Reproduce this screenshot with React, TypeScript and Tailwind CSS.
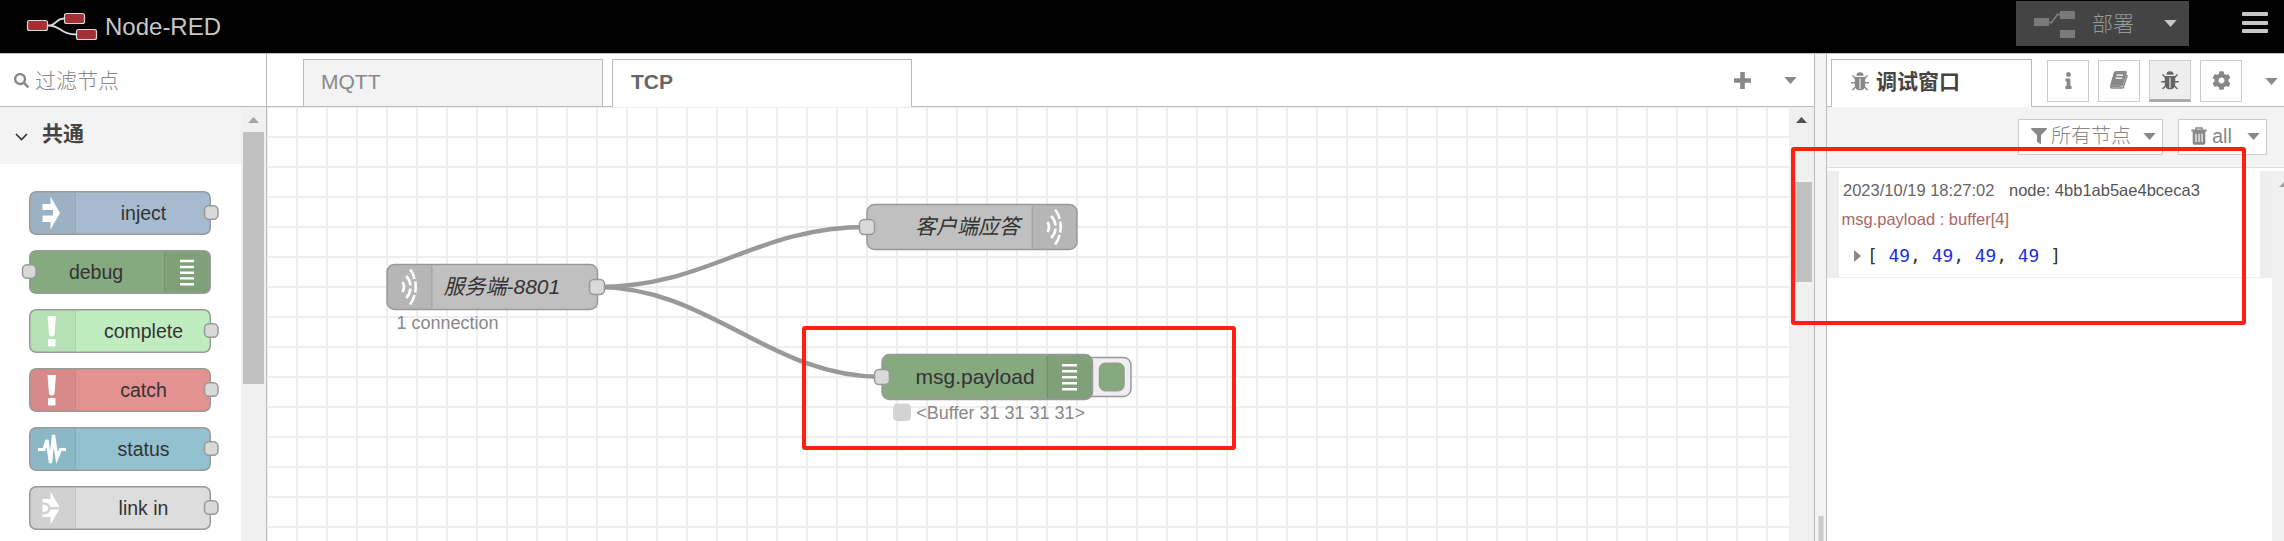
import React from "react";
import { FaInfo, FaCog, FaFilter, FaSearch } from "react-icons/fa";

const PaletteIcons: Record<string, React.ReactNode> = {
  inject: <path d="M13.500 13h8V5.500L31 22L21.500 38.500V31H13.500V24.500H24V19H13.500Z" fill="#fff" />,
  bang: (
    <g fill="#fff">
      <path d="M18.500 7h8.500l-1.500 18.500q-.200 2-2.750 2t-2.750-2Z" />
      <rect x="19" y="30" width="7.500" height="7.500" rx="1.200" />
    </g>
  ),
  status: (
    <path d="M9 22.500H15L18 13L21.500 36L24.500 8L28 31L31.500 22.500H37" fill="none" stroke="#fff" strokeWidth="3.200" />
  ),
  link: (
    <g>
      <path d="M13.500 13h8V5.500L31 22L21.500 38.500V31H13.500Z" fill="#fff" />
      <path d="M12 17.200C18 17.200 20.500 19.500 20.500 22.200C20.500 25 18 27.500 12 27.500M20 22.200H31" fill="none" stroke="#d2d2d2" strokeWidth="2.400" />
    </g>
  ),
  debug: (
    <path d="M152 11h14M152 17h14M152 22.700h14M152 28.400h14M152 34.300h14" stroke="#fff" strokeWidth="2.400" />
  ),
};

const paletteNodes = [
  { label: "inject", fill: "#a6bbcf", icon: "inject" },
  { label: "debug", fill: "#87a980", icon: "debug", right: true },
  { label: "complete", fill: "#c0edc0", icon: "bang" },
  { label: "catch", fill: "#e49191", icon: "bang" },
  { label: "status", fill: "#94c1d0", icon: "status" },
  { label: "link in", fill: "#dddddd", icon: "link" },
];

function PaletteNode({ label, fill, icon, right }: { label: string; fill: string; icon: string; right?: boolean }) {
  return (
    <div className="relative h-[44px] w-[182px]">
      <svg className="absolute inset-0 overflow-visible" width="182" height="44">
        <rect x=".75" y=".75" width="180.500" height="42.500" rx="6.500" fill={fill} stroke="#999" strokeWidth="1.500" />
        <path
          d={right ? "M135.500 1.500H174.500a6 6 0 0 1 6 6V36.500a6 6 0 0 1-6 6H135.500Z" : "M46 1.500H7.500a6 6 0 0 0-6 6V36.500a6 6 0 0 0 6 6H46Z"}
          fill="#000"
          fillOpacity=".05"
        />
        <path d={right ? "M135.500 1.500V42.500" : "M46.500 1.500V42.500"} stroke="#000" strokeOpacity=".1" />
        <g transform={right ? "translate(-1 0)" : ""}>{PaletteIcons[icon]}</g>
        <rect x={right ? -6.5 : 175.5} y="14.700" width="13.500" height="13.500" rx="4.500" fill="#d9d9d9" stroke="#999" strokeWidth="1.500" />
      </svg>
      <div className={right ? "relative w-[134px] text-center text-[19.500px] leading-[45px]" : "relative ml-[47px] w-[135px] text-center text-[19.500px] leading-[45px]"}>{label}</div>
    </div>
  );
}

function Bug({ className }: { className: string }) {
  return (
    <svg className={className} viewBox="0 0 18 19" width="18" height="19">
      <path d="M5.400 3.700a3.600 3.400 0 0 1 7.200 0Z" fill="currentColor" />
      <path d="M3.800 4.900H14.200V12.500C14.200 16 12.500 18.300 9 18.300S3.800 16 3.800 12.500Z" fill="currentColor" />
      <path d="M9 6.500V17" stroke="#fff" strokeOpacity=".85" strokeWidth="1.200" />
      <path d="M1.500 3.500L4.500 6.500M16.500 3.500L13.500 6.500M.200 10.800H4.500M17.800 10.800H13.500M1.500 18L5 14.500M16.500 18L13 14.500" stroke="currentColor" strokeWidth="1.500" />
    </svg>
  );
}

function Book() {
  return (
    <svg width="20" height="19" viewBox="0 0 20 19">
      <path d="M6.500.5H16q1.500 0 1 1.700L13.300 13.700q-.500 1.500-2 1.500H3q-1.500 0-1.200 1t1.500.9H13q1 0 1.400-1L18.300 4" fill="none" stroke="#888" strokeWidth="1.500" />
      <path d="M6.500.3H15.800q1.500 0 1 1.700L13.300 13q-.500 1.800-2.300 1.800H1L4.500 2.200Q5 .5 6.500.3Z" fill="#888" />
      <path d="M7.500 4.200H14M6.700 7.200H13.200" stroke="#fff" strokeWidth="1.200" />
    </svg>
  );
}

function Trash() {
  return (
    <svg width="16" height="18" viewBox="0 0 16 18">
      <path d="M5 3V1H11V3" fill="none" stroke="#888" strokeWidth="1.500" />
      <path d="M.3 2.600h15.400v1.800H.3ZM1.700 4H14.300V16q0 1.700-1.500 1.700h-9.600Q1.700 17.700 1.700 16Z" fill="#888" />
      <path d="M5 6.800V15M8 6.800V15M11 6.800V15" stroke="#fff" strokeWidth="1.200" />
    </svg>
  );
}

function Caret({ color = "#888" }: { color?: string }) {
  return (
    <svg className="shrink-0" width="13" height="7" viewBox="0 0 13 7">
      <path d="M.300 0H12.700L6.500 7Z" fill={color} />
    </svg>
  );
}

function Waves({ x, y }: { x: number; y: number }) {
  return (
    <g transform={`translate(${x} ${y})`} fill="none" stroke="#fff" strokeWidth="2.600">
      <path d="M-7.500-5Q-4.500 0-7.500 5" />
      <path d="M-3.800-11Q0-7 .500-1.500M.500 1.500Q0 7-3.800 11" />
      <path d="M.200-17.500Q3.500-13 4.500-8M5.300-5.500Q6.100 0 5.300 5.500M4.500 8Q3.500 13 .200 17.500" />
    </g>
  );
}

function Port({ x, y }: { x: number; y: number }) {
  return <rect x={x - 7.5} y={y - 7.5} width="15" height="15" rx="4.500" fill="#d9d9d9" stroke="#999" strokeWidth="1.500" />;
}

function Flow() {
  return (
    <svg className="block h-full w-full text-[21px]" viewBox="267 107 1522 434" fill="#333">
      <defs>
        <pattern id="grid" x="296" y="136" width="30" height="30" patternUnits="userSpaceOnUse">
          <path d="M0 1H30M1 0V30" stroke="#eee" strokeWidth="2" />
        </pattern>
      </defs>
      <rect x="267" y="107" width="1522" height="434" fill="#fff" />
      <rect x="267" y="107" width="1522" height="434" fill="url(#grid)" />
      <g fill="none" stroke="#999" strokeWidth="4.500">
        <path d="M597 287C709.500 287 754.500 227 867 227" />
        <path d="M597 287C709.500 287 769.500 377 882 377" />
      </g>
      <g stroke="#999" strokeWidth="1.500">
        <rect x="387" y="264.500" width="210.500" height="45" rx="7.500" fill="#c0c0c0" />
        <rect x="867" y="204.500" width="210" height="45" rx="7.500" fill="#c0c0c0" />
        <rect x="1075" y="357.500" width="56" height="39" rx="7.500" fill="#eee" />
        <rect x="1099.500" y="363.300" width="24.500" height="27.500" rx="6" fill="#87a980" />
        <rect x="882" y="354.500" width="210.500" height="45" rx="7.500" fill="#87a980" />
      </g>
      <g fill="#000" fillOpacity=".05">
        <path d="M432 265.250H394.500a6.750 6.750 0 0 0-6.750 6.750V302a6.750 6.750 0 0 0 6.750 6.750H432Z" />
        <path d="M1032 205.250H1069.500a6.750 6.750 0 0 1 6.750 6.750V242a6.750 6.750 0 0 1-6.750 6.750H1032Z" />
        <path d="M1047 355.250H1085a6.750 6.750 0 0 1 6.750 6.750V392a6.750 6.750 0 0 1-6.750 6.750H1047Z" />
      </g>
      <path d="M432 266V308M1032.200 206V248M1047.200 356V398" stroke="#000" strokeOpacity=".1" strokeWidth="1.500" />
      <Waves x={410} y={287} />
      <Waves x={1055} y={227} />
      <path d="M1062 365.200h15M1062 371.200h15M1062 377.200h15M1062 383.200h15M1062 389.300h15" stroke="#fff" strokeWidth="2.400" />
      <Port x={597} y={287} />
      <Port x={867} y={227} />
      <Port x={882} y={377} />
      <text x="443.500" y="294" fontStyle="italic">服务端-8801</text>
      <text x="915" y="234" fontStyle="italic">客户端应答</text>
      <text x="915.500" y="384">msg.payload</text>
      <g fill="#888" fontSize="18">
        <text x="396.500" y="329">1 connection</text>
        <text x="916.300" y="419">&lt;Buffer 31 31 31 31&gt;</text>
      </g>
      <rect x="893" y="403.500" width="18" height="17.500" rx="4.500" fill="#d3d3d3" />
    </svg>
  );
}

export default function App() {
  return (
    <div className="relative flex h-[541px] w-[2284px] flex-col overflow-hidden bg-white font-['Liberation_Sans','Noto_Sans_CJK_SC',sans-serif] text-[#333]">
      <header className="flex h-[54px] shrink-0 items-start border-b border-[#bbb] bg-black">
        <svg className="mt-[12px] ml-[26px]" width="72" height="30" viewBox="26 12 72 30">
          <path d="M48 25.500C58 25.500 54 18.500 65 18.500M48 25.500C62 25.500 59 34.500 77 34.500" fill="none" stroke="#d9d9d9" strokeWidth="1.800" />
          <g fill="#a03236" stroke="#d9d9d9" strokeWidth="1.200">
            <rect x="27.500" y="20.500" width="20" height="10" rx="2" />
            <rect x="64.500" y="13.500" width="20" height="10" rx="2" />
            <rect x="76.500" y="29.500" width="20" height="10" rx="2" />
          </g>
        </svg>
        <span className="ml-[7px] text-[24px] leading-[54px] text-[#c7c7c7]">Node-RED</span>
        <div className="mt-px ml-auto flex h-[45px] w-[173px] items-center bg-[#444] pl-[18px]">
          <svg width="42" height="28" viewBox="0 0 42 28">
            <path d="M0 8h15v8H0ZM26 1h15v8H26ZM26 20h15v8H26Z" fill="#7a7a7a" />
            <path d="M14 12.500H17.500L23.500 4.500H27" fill="none" stroke="#7a7a7a" strokeWidth="1.800" />
          </svg>
          <span className="ml-[16px] w-[42px] text-[21px] font-light text-[#999]">部署</span>
          <span className="ml-[30px] flex"><Caret color="#c7c7c7" /></span>
        </div>
        <div className="mt-[12px] mr-[16px] ml-[53px] flex flex-col gap-[4.500px]">
          <div className="h-[4px] w-[26px] rounded-[1px] bg-[#c7c7c7]" />
          <div className="h-[4px] w-[26px] rounded-[1px] bg-[#c7c7c7]" />
          <div className="h-[4px] w-[26px] rounded-[1px] bg-[#c7c7c7]" />
        </div>
      </header>

      <div className="flex min-h-0 flex-1">
        <aside className="flex w-[267px] shrink-0 flex-col border-r border-[#bbb]">
          <div className="flex h-[53px] shrink-0 items-center border-b border-[#bbb] pl-[14px]">
            <FaSearch size={15} color="#888" />
            <span className="mt-px ml-[6px] text-[21px] font-light text-[#888]">过滤节点</span>
          </div>
          <div className="flex min-h-0 flex-1">
            <div className="w-[241px]">
              <div className="flex h-[57px] items-center bg-[#f3f3f3] pl-[15px]">
                <svg width="13" height="8" viewBox="0 0 13 8" className="mt-[2px]">
                  <path d="M1 1L6.500 6.500L12 1" fill="none" stroke="#333" strokeWidth="1.600" />
                </svg>
                <span className="mb-[3px] ml-[14px] text-[21px] font-bold text-[#444]">共通</span>
              </div>
              <div className="flex flex-col gap-[15px] pt-[27px] pl-[29px]">
                {paletteNodes.map((n) => (
                  <PaletteNode key={n.label} {...n} />
                ))}
              </div>
            </div>
            <div className="w-[25px] bg-[#f0f0f0] pt-[10px] pl-[2px]">
              <svg width="21" height="6" className="block">
                <path d="M5 6L10.500 0L16 6Z" fill="#a3a3a3" />
              </svg>
              <div className="mt-[9px] h-[252px] w-[21px] bg-[#c1c1c1]" />
            </div>
          </div>
        </aside>

        <main className="flex w-[1548px] shrink-0 flex-col border-r border-[#bbb]">
          <div className="flex h-[53px] shrink-0 text-[21px]">
            <div className="w-[36px] border-b border-[#bbb]" />
            <div className="mt-[5px] h-[48px] w-[300px] border border-[#bbb] bg-[#f3f3f3] pl-[17px] leading-[44px] text-[#888]">MQTT</div>
            <div className="w-[9px] border-b border-[#bbb]" />
            <div className="mt-[5px] h-[48px] w-[300px] border border-b-0 border-[#bbb] pl-[18px] leading-[44px] font-bold text-[#666]">TCP</div>
            <div className="flex flex-1 items-center justify-end border-b border-[#bbb] pr-[17px]">
              <svg width="17" height="17" viewBox="0 0 17 17">
                <path d="M8.500 0V17M0 8.500H17" stroke="#888" strokeWidth="4.600" />
              </svg>
              <span className="ml-[33px] flex"><Caret /></span>
            </div>
          </div>
          <div className="flex min-h-0 flex-1">
            <div className="w-[1522px] shrink-0"><Flow /></div>
            <div className="w-[25px] bg-[#f0f0f0] pt-[10px] pl-[2px]">
              <svg width="21" height="6" className="block">
                <path d="M5 6L10.500 0L16 6Z" fill="#505050" />
              </svg>
              <div className="mt-[59px] h-[100px] w-[21px] bg-[#c1c1c1]" />
            </div>
          </div>
        </main>

        <div className="flex w-[12px] shrink-0 flex-col justify-end border-r border-[#bbb] bg-[#f3f3f3] pl-[3px]">
          <div className="h-[25px] w-[6px] border-x border-[#ddd] bg-[#ccc]" />
        </div>

        <aside className="flex min-w-0 flex-1 flex-col">
          <div className="flex h-[53px] shrink-0">
            <div className="w-[4px] border-b border-[#bbb]" />
            <div className="mt-[5px] flex h-[48px] w-[201px] items-center border border-b-0 border-[#bbb] pb-[4px] pl-[19px]">
              <Bug className="text-[#888]" />
              <span className="ml-[7px] text-[21px] font-bold text-[#444]">调试窗口</span>
            </div>
            <div className="flex flex-1 gap-[9px] border-b border-[#bbb] pt-[6px] pl-[15px] text-[#888]">
              <div className="flex h-[42px] w-[42px] items-center justify-center border border-[#ccc] pb-[2px]"><FaInfo size={17} /></div>
              <div className="flex h-[42px] w-[42px] items-center justify-center border border-[#ccc] pb-[2px]"><Book /></div>
              <div className="flex h-[42px] w-[42px] items-center justify-center border border-b-3 border-[#ccc] border-b-[#aaa] bg-[#eee]"><Bug className="text-[#666]" /></div>
              <div className="flex h-[42px] w-[42px] items-center justify-center border border-[#ccc] pb-[2px]"><FaCog size={19} /></div>
              <div className="ml-[14px] flex h-[42px] shrink-0 items-center"><Caret /></div>
            </div>
          </div>
          <div className="flex h-[61px] shrink-0 gap-[15px] border-b border-[#ddd] bg-[#f3f3f3] pt-[12px] pl-[191px] text-[#888]">
            <div className="flex h-[36px] w-[145px] items-center border border-[#ccc] bg-white pb-[2px] pl-[12px]">
              <FaFilter size={16} />
              <span className="ml-[4px] w-[80px] text-[20px] font-light whitespace-nowrap">所有节点</span>
              <span className="ml-[12px] flex"><Caret /></span>
            </div>
            <div className="flex h-[36px] w-[89px] items-center border border-[#ccc] bg-white pb-[2px] pl-[12px]">
              <Trash />
              <span className="ml-[5px] text-[20px] leading-[20px]">all</span>
              <span className="ml-[15px] flex"><Caret /></span>
            </div>
          </div>
          <div className="flex min-h-0 flex-1 pt-[3px]">
            <div className="w-[445px] shrink-0">
              <div className="h-[107px] border-x-12 border-b border-[#eee] text-[16.500px]">
                <div className="flex pt-[9px] pl-[4px] leading-[20px]">
                  <span className="w-[166px] text-[#666]">2023/10/19 18:27:02</span>
                  <span className="text-[#555]">node: 4bb1ab5ae4bceca3</span>
                </div>
                <div className="mt-[9px] pl-[2.500px] leading-[20px] text-[#aa6767]">msg.payload : buffer[4]</div>
                <div className="mt-[15px] flex items-center pl-[15px] font-['DejaVu_Sans_Mono',monospace] text-[17.900px] leading-[24px] whitespace-pre text-[#333]">
                  <svg width="7" height="12" className="mr-[6px]"><path d="M0 0L7 6L0 12Z" fill="#888" /></svg>
                  <span>[ <b className="font-normal text-[#2033d6]">49</b>, <b className="font-normal text-[#2033d6]">49</b>, <b className="font-normal text-[#2033d6]">49</b>, <b className="font-normal text-[#2033d6]">49</b> ]</span>
                </div>
              </div>
            </div>
            <div className="flex-1 overflow-hidden bg-[#f0f0f0] pt-[10px] pl-[7px]">
              <svg width="12" height="6" className="block"><path d="M0 6L6 0L12 6Z" fill="#a3a3a3" /></svg>
            </div>
          </div>
        </aside>
      </div>

      <div className="absolute top-[326px] left-[802px] h-[124px] w-[434px] rounded-[3px] border-4 border-[#ff2010]" />
      <div className="absolute top-[147px] left-[1791px] h-[178px] w-[455px] rounded-[3px] border-4 border-[#ff2010]" />
    </div>
  );
}
